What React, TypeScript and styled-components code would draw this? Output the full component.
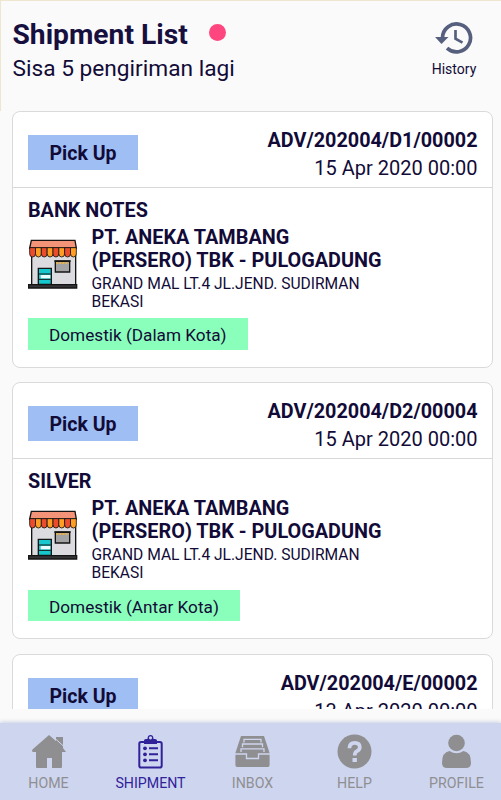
import React from "react";
import styled, { createGlobalStyle } from "styled-components";

const Global = createGlobalStyle`
  * { box-sizing: border-box; }
  body { margin: 0; background: #fafafa; overflow: hidden; }
`;
const Screen = styled.div`
  width: 501px; height: 800px; overflow: hidden; display: flex; flex-direction: column;
  background: #fafafa; color: #120b38; font-family: Roboto, sans-serif;
`;
const Header = styled.header`
  height: 111px; flex: none; display: flex; justify-content: space-between;
  padding: 17px 24px 0 11.5px; border-top: 1px solid #eee6cf; border-left: 1px solid #eee6cf;
`;
const TitleRow = styled.div`display: flex; align-items: center; gap: 21px; height: 34px;`;
const Title = styled.h1`margin: 0; font-size: 28.2px; line-height: 36px; font-weight: 700; white-space: nowrap; color: #17103f;`;
const Dot = styled.span`width: 17px; height: 17px; border-radius: 50%; background: #ff467e; margin-top: -5px;`;
const Subtitle = styled.p`margin: 0; font-size: 22.7px; line-height: 34px;`;
const History = styled.button`
  border: 0; padding: 3px 0 0; background: none; color: inherit; font: 14px/18px Roboto, sans-serif;
  display: flex; flex-direction: column; align-items: center; gap: 5px; width: 46px; height: 65px;
`;
const List = styled.main`
  height: 598px; flex: none; overflow: hidden; padding: 0 8px 0 12px;
  display: flex; flex-direction: column; gap: 14.9px;
`;
const Card = styled.article`
  flex: none; height: 256.5px; border: 1.5px solid #dadada; border-radius: 8px; background: #fff;
`;
const CardHead = styled.div`
  height: 76px; border-bottom: 1px solid #d8d8d8; padding: 15px 14.5px 0 15px;
  display: flex; justify-content: space-between;
`;
const Status = styled.span`
  width: 110px; height: 35px; margin-top: 8px; background: #9fbff4; text-align: center;
  font-size: 19.5px; line-height: 38px; font-weight: 700;
`;
const Reference = styled.div`text-align: right; font-size: 20px; line-height: 26px;`;
const Code = styled.div`font-weight: 700; font-size: 19.8px; line-height: 28px;`;
const CardBody = styled.div`padding: 10.6px 15px 0;`;
const Category = styled.div`font-size: 19.8px; line-height: 23px; font-weight: 700;`;
const Place = styled.div`display: flex; gap: 13.5px; margin-top: 4px;`;
const PlaceName = styled.div`font-size: 19.85px; line-height: 23px; font-weight: 700; white-space: pre-line;`;
const Address = styled.div`font-size: 15.6px; line-height: 18px; margin-top: 3px; white-space: pre-line;`;
const Tag = styled.span`
  display: inline-block; margin-top: 7.6px; height: 31.5px; padding: 0 21px; background: #8affbb;
  font-size: 17.2px; line-height: 34px; white-space: nowrap;
`;
const StoreSvg = styled.svg`width: 50px; height: 50px; margin-top: 13px; flex: none;`;
const Nav = styled.nav`
  margin-top: auto; height: 77px; flex: none; background: #ced5ef; box-shadow: 0 -1px 4px #c9cde0;
  display: grid; grid-template-columns: repeat(5, 102px); justify-content: center; padding-left: 4px;
`;
const NavItem = styled.a<{ $active?: boolean }>`
  display: flex; flex-direction: column; align-items: center; padding-top: 11px; gap: 6px;
  font-size: 14.2px; line-height: 16px; color: ${(p) => (p.$active ? "#31229a" : "#8f8f91")};
`;

const Store = () => (
  <StoreSvg viewBox="0 0 150 150" stroke="#141414" strokeWidth="4">
    <path d="M11 45H143V138H11Z" fill="#dcdce0" />
    <path d="M31 88H70V136H31Z" fill="#16c8cd" />
    <path d="M33 105H68M33 121H68" strokeWidth="3" />
    <path d="M38 108H67V118H38Z" fill="#e9ffff" stroke="none" />
    <path d="M82 67H125V99H82Z" fill="#a3a3a6" />
    <path d="M79 66H128" strokeWidth="5" />
    <path d="M85 72H122" stroke="#e8b14c" strokeWidth="6" strokeDasharray="6 3" />
    <path d="M10 4H141L145 27H5Z" fill="#f39479" />
    {Array.from({ length: 8 }, (_, i) => (
      <path key={i} d={`M${5 + i * 17.5} 26H${22.5 + i * 17.5}V44Q${22.5 + i * 17.5} 54 ${13.75 + i * 17.5} 54Q${5 + i * 17.5} 54 ${5 + i * 17.5} 44Z`} fill={i % 2 ? "#ff9e22" : "#ed4c2c"} strokeWidth="2.5" />
    ))}
    <path d="M2 137H146V147H2Z" fill="#343438" />
  </StoreSvg>
);

const HistoryIcon = () => (
  <svg width="38" height="34" viewBox="0 0 38 34">
    <path d="M7.5 16.5A14 14 0 1 1 12 27.2" fill="none" stroke="#56607e" strokeWidth="3.7" />
    <path d="M0 16H13.5L6.5 23Z" fill="#56607e" />
    <path d="M20.5 9V17.8L27.5 21.6" fill="none" stroke="#56607e" strokeWidth="2.7" />
  </svg>
);
const HomeIcon = () => (
  <svg width="34" height="35" viewBox="0 0 34 35" fill="currentColor">
    <path d="M17 1L24 7V3H31V14L34 18H30V33Q30 34 29 34H20V24H15V34H5Q4 34 4 33V18H1Q-1 17 1 15Z" />
    <path d="M22.5 4L32 12.5" stroke="#ced5ef" strokeWidth="1" />
  </svg>
);
const ClipboardIcon = () => (
  <svg width="25" height="35" viewBox="0 0 25 35" fill="none" stroke="currentColor" strokeWidth="2">
    <rect x="1.3" y="8" width="22.4" height="25.5" rx="1.8" />
    <path d="M6 10V6.5Q6 5 8 5H9.5Q9.5 1 12.5 1T15.5 5H17Q19 5 19 6.5V10Z" fill="currentColor" stroke="none" />
    <circle cx="12.5" cy="3.8" r="1.6" fill="#ced5ef" stroke="none" />
    <path d="M11 14.3H20M11 20.3H20M11 26.3H20" />
    <g fill="currentColor" stroke="none"><circle cx="7" cy="14.3" r="1.9" /><circle cx="7" cy="20.3" r="1.9" /><circle cx="7" cy="26.3" r="1.9" /></g>
  </svg>
);
const InboxIcon = () => (
  <svg width="35" height="35" viewBox="0 0 35 35" fill="currentColor">
    <path d="M6 2H29L34.6 19V31Q34.6 33 33 33H2Q0.4 33 0.4 31V19Z" />
    <path d="M9 8.5V5.3H26V8.5M7.5 13.3V10H27.5V13.3M6 18V14.8H29V18" fill="none" stroke="#ced5ef" strokeWidth="1.3" />
    <path d="M0 20H11.5V24.5H23.5V20H35" fill="none" stroke="#ced5ef" strokeWidth="1.3" />
  </svg>
);
const HelpIcon = () => (
  <svg width="35" height="35" viewBox="0 0 35 35">
    <circle cx="17.5" cy="17.5" r="17" fill="currentColor" />
    <path d="M12.4 14.2Q12.6 8.8 17.7 8.8Q22.8 8.8 22.8 13.2Q22.8 15.7 20 17.2Q17.7 18.4 17.7 21.5" fill="none" stroke="#ced5ef" strokeWidth="3.7" />
    <rect x="15.5" y="24" width="4.4" height="4" fill="#ced5ef" />
  </svg>
);
const ProfileIcon = () => (
  <svg width="29" height="35" viewBox="0 0 29 35" fill="currentColor">
    <circle cx="14.5" cy="9" r="8.3" />
    <path d="M7.5 17Q14.5 21.5 21.5 17Q29 18 29 29Q29 34 24 34H5Q0 34 0 29Q0 18 7.5 17Z" />
  </svg>
);

const shipments = [
  { code: "ADV/202004/D1/00002", date: "15 Apr 2020 00:00", category: "BANK NOTES", zone: "Domestik (Dalam Kota)" },
  { code: "ADV/202004/D2/00004", date: "15 Apr 2020 00:00", category: "SILVER", zone: "Domestik (Antar Kota)" },
  { code: "ADV/202004/E/00002", date: "13 Apr 2020 00:00", category: "", zone: "" },
];
const tabs = [
  { label: "HOME", Icon: HomeIcon },
  { label: "SHIPMENT", Icon: ClipboardIcon, active: true },
  { label: "INBOX", Icon: InboxIcon },
  { label: "HELP", Icon: HelpIcon },
  { label: "PROFILE", Icon: ProfileIcon },
];

export default function App() {
  return (
    <Screen>
      <Global />
      <Header>
        <div>
          <TitleRow><Title>Shipment List</Title><Dot /></TitleRow>
          <Subtitle>Sisa 5 pengiriman lagi</Subtitle>
        </div>
        <History><HistoryIcon />History</History>
      </Header>
      <List>
        {shipments.map((s) => (
          <Card key={s.code}>
            <CardHead>
              <Status>Pick Up</Status>
              <Reference><Code>{s.code}</Code>{s.date}</Reference>
            </CardHead>
            {s.category && (
              <CardBody>
                <Category>{s.category}</Category>
                <Place>
                  <Store />
                  <div>
                    <PlaceName>{"PT. ANEKA TAMBANG\n(PERSERO) TBK - PULOGADUNG"}</PlaceName>
                    <Address>{"GRAND MAL LT.4 JL.JEND. SUDIRMAN\nBEKASI"}</Address>
                  </div>
                </Place>
                <Tag>{s.zone}</Tag>
              </CardBody>
            )}
          </Card>
        ))}
      </List>
      <Nav>
        {tabs.map(({ label, Icon, active }) => (
          <NavItem key={label} $active={active}><Icon />{label}</NavItem>
        ))}
      </Nav>
    </Screen>
  );
}
